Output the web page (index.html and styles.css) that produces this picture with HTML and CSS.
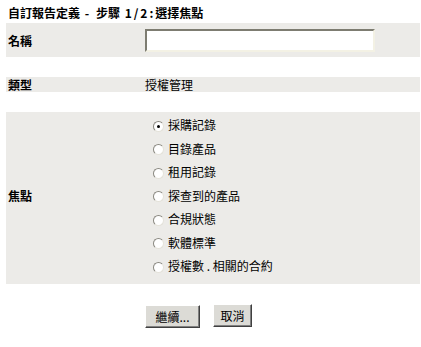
FILE: index.html
```html
<!DOCTYPE html>
<html>
<head>
<meta charset="utf-8">
<link rel="stylesheet" href="styles.css">
</head>
<body>
<div class="page">
  <div class="title">自訂報告定義<span class="lat"> - </span>步驟<span class="lat"> 1/2:</span>選擇焦點</div>
  <div class="row row-name">
    <div class="label">名稱</div>
    <div class="value"><input class="text-input" type="text"></div>
  </div>
  <div class="spacer"></div>
  <div class="row row-type">
    <div class="label">類型</div>
    <div class="value">授權管理</div>
  </div>
  <div class="spacer2"></div>
  <div class="row row-focus">
    <div class="label">焦點</div>
    <div class="value radios">
      <label class="opt"><input type="radio" name="f" checked><span>採購記錄</span></label>
      <label class="opt"><input type="radio" name="f"><span>目錄產品</span></label>
      <label class="opt"><input type="radio" name="f"><span>租用記錄</span></label>
      <label class="opt"><input type="radio" name="f"><span>探查到的產品</span></label>
      <label class="opt"><input type="radio" name="f"><span>合規狀態</span></label>
      <label class="opt"><input type="radio" name="f"><span>軟體標準</span></label>
      <label class="opt"><input type="radio" name="f"><span>授權數 . 相關的合約</span></label>
    </div>
  </div>
  <div class="buttons">
    <button class="btn btn-continue">繼續...</button>
    <button class="btn btn-cancel">取消</button>
  </div>
</div>
</body>
</html>
```
FILE: styles.css
```css
html, body {
  margin: 0;
  padding: 0;
  background: #ffffff;
}
body {
  font-family: "Noto Sans CJK TC", "Liberation Sans", sans-serif;
  font-size: 12px;
  color: #000;
}
.page {
  padding: 6px 1px 0 6px;
}
.title {
  height: 17px;
  line-height: 14px;
  font-weight: bold;
  padding-left: 2px;
}
.lat {
  letter-spacing: 2px;
}
.row {
  display: flex;
  align-items: center;
  background: #ecebe8;
}
.label {
  width: 137px;
  padding-left: 2px;
  font-weight: bold;
  flex: none;
}
.value {
  flex: 1;
}
.row-name {
  height: 34px;
}
.text-input {
  box-sizing: border-box;
  width: 230px;
  height: 23px;
  margin: 1px 0 0 0;
  padding: 0 3px;
  border: 2px solid;
  border-color: #7d7c71 #f3f1e4 #f3f1e4 #7d7c71;
  background: #fff;
  outline: none;
  font-size: 12px;
}
.spacer {
  height: 20px;
}
.row-type {
  height: 15px;
  line-height: 15px;
}
.spacer2 {
  height: 20px;
}
.row-focus {
  padding: 1px 0 6px 0;
}
.radios {
  display: flex;
  flex-direction: column;
}
.opt {
  height: 23.5px;
  display: flex;
  align-items: center;
  padding-left: 8px;
}
.opt input {
  -webkit-appearance: none;
  appearance: none;
  box-sizing: border-box;
  width: 11px;
  height: 11px;
  margin: 3px 4px 0 0;
  border-radius: 50%;
  border: 1px solid;
  border-color: #8a8880 #e4e2da #e4e2da #8a8880;
  background: #fff;
  position: relative;
  flex: none;
}
.opt input:checked::after {
  content: "";
  position: absolute;
  left: 3px;
  top: 3px;
  width: 3px;
  height: 3px;
  border-radius: 50%;
  background: #000;
}
.buttons {
  display: flex;
  gap: 13px;
  padding: 20px 0 0 139px;
}
.btn {
  box-sizing: border-box;
  height: 23px;
  padding: 0;
  font-family: "Noto Sans CJK TC", "Liberation Sans", sans-serif;
  font-size: 12px;
  background: #dcdbd6;
  border: 1px solid;
  border-color: #ffffff #404040 #404040 #ffffff;
  box-shadow: inset -1px -1px #808080;
  color: #000;
}
.btn-continue {
  width: 55px;
  margin-top: 1px;
}
.btn-cancel {
  width: 39px;
}
```
